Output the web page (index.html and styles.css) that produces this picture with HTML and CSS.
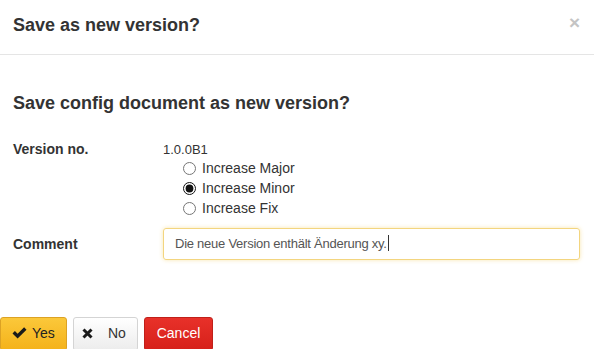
FILE: index.html
```html
<!DOCTYPE html>
<html lang="en">

<head>
    <meta charset="UTF-8">
    <title>Save as new version?</title>
    <link rel="stylesheet" href="styles.css">
</head>

<body>
    <div class="modal">
        <div class="modal-header">
            <h4 class="modal-title">Save as new version?</h4>
            <span class="close">&times;</span>
        </div>

        <div class="modal-body">
            <h3 class="question">Save config document as new version?</h3>

            <div class="field">
                <span class="label">Version no.</span>
                <div class="value">
                    <div class="version">1.0.0B1</div>
                    <label class="radio"><input type="radio" name="inc"> Increase Major</label>
                    <label class="radio"><input type="radio" name="inc" checked> Increase Minor</label>
                    <label class="radio"><input type="radio" name="inc"> Increase Fix</label>
                </div>
            </div>

            <div class="field comment">
                <span class="label">Comment</span>
                <div class="value">
                    <div class="input">Die neue Version enthält Änderung xy.<span class="caret"></span></div>
                </div>
            </div>
        </div>

        <div class="modal-footer">
            <button class="btn btn-yes">
                <svg width="15" height="12" viewBox="0 0 15 12"><path d="M0.5 6.5 L2.9 4.1 L5.6 6.8 L12.1 0.3 L14.5 2.7 L5.6 11.6 Z" fill="#1a1a1a"/></svg>
                Yes
            </button>
            <button class="btn btn-no">
                <svg width="11" height="11" viewBox="0 0 11 11"><path d="M1.5 1.5 L9.5 9.5 M9.5 1.5 L1.5 9.5" stroke="#1a1a1a" stroke-width="3"/></svg>
                No
            </button>
            <button class="btn btn-cancel">Cancel</button>
        </div>
    </div>
</body>

</html>
```

FILE: styles.css
```css
html,
body {
    margin: 0;
    padding: 0;
    background: #fff;
    color: #333;
    font-family: "Liberation Sans", Arial, sans-serif;
    font-size: 13px;
}

.modal {
    width: 594px;
}

.modal-header {
    display: flex;
    justify-content: space-between;
    align-items: flex-start;
    height: 55px;
    box-sizing: border-box;
    padding: 15px 13px 0 13px;
    border-bottom: 1px solid #e5e5e5;
}

.modal-title {
    margin: 0;
    font-size: 18px;
    font-weight: bold;
    line-height: 20px;
}

.close {
    color: #c4c4c4;
    font-size: 19px;
    font-weight: bold;
    line-height: 16px;
    margin-right: 1px;
}

.modal-body {
    padding: 37px 13px 0 13px;
}

.question {
    margin: 0 0 27px 0;
    font-size: 18px;
    font-weight: bold;
    line-height: 22px;
}

.field {
    display: flex;
}

.field .label {
    width: 150px;
    flex-shrink: 0;
    font-size: 14px;
    font-weight: bold;
    line-height: 17px;
}

.field .value {
    flex: 1;
}

.version {
    line-height: 17px;
}

.radio {
    display: flex;
    align-items: center;
    height: 20px;
    margin-left: 19px;
    font-size: 14px;
}

.radio input {
    width: 13px;
    height: 13px;
    margin: 0 6px 0 1px;
    accent-color: #111;
}

.comment {
    margin-top: 10px;
    align-items: center;
}

.input {
    height: 32px;
    box-sizing: border-box;
    border: 1px solid #f3d57f;
    border-radius: 3px;
    box-shadow: 0 0 4px rgba(240, 200, 80, 0.45);
    padding: 0 11px;
    line-height: 30px;
    color: #555;
    letter-spacing: -0.25px;
    margin-right: 1px;
}

.caret {
    display: inline-block;
    width: 1px;
    height: 16px;
    margin-left: 1px;
    background: #333;
    vertical-align: -3px;
}

.modal-footer {
    display: flex;
    gap: 6px;
    padding-top: 57px;
}

.btn {
    display: flex;
    align-items: center;
    height: 34px;
    box-sizing: border-box;
    border-radius: 3px;
    font-family: "Liberation Sans", Arial, sans-serif;
    font-size: 14px;
    padding: 0 0 2px 0;
    border: 1px solid #ccc;
}

.btn-yes {
    width: 67px;
    gap: 5px;
    padding-left: 11px;
    background: linear-gradient(#fbc83a, #f4b21a);
    border-color: #dca224;
    color: #222;
}

.btn-no {
    width: 65px;
    gap: 15px;
    padding-left: 8px;
    background: linear-gradient(#fff, #ececec);
    border-color: #d4d4d4;
    color: #333;
}

.btn-cancel {
    width: 69px;
    justify-content: center;
    background: linear-gradient(#e8312a, #d6201a);
    border-color: #c0201a;
    color: #fff;
}
```
